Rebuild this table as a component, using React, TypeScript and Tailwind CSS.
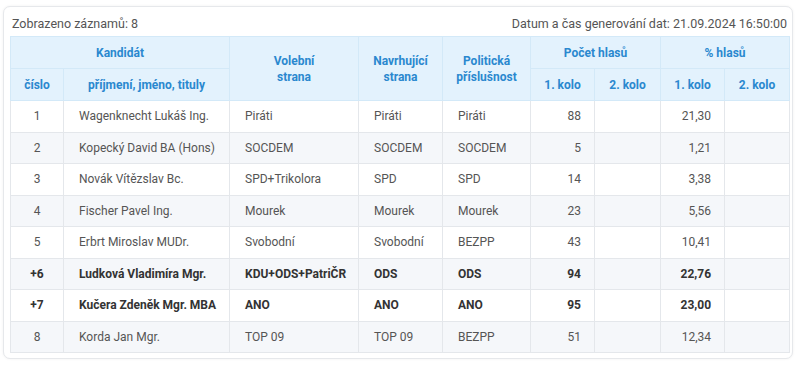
import React from "react";

type Row = { n: string; name: string; vol: string; nav: string; pol: string; v1: string; p1: string; bold?: boolean };

const rows: Row[] = [
  { n: "1", name: "Wagenknecht Lukáš Ing.", vol: "Piráti", nav: "Piráti", pol: "Piráti", v1: "88", p1: "21,30" },
  { n: "2", name: "Kopecký David BA (Hons)", vol: "SOCDEM", nav: "SOCDEM", pol: "SOCDEM", v1: "5", p1: "1,21" },
  { n: "3", name: "Novák Vítězslav Bc.", vol: "SPD+Trikolora", nav: "SPD", pol: "SPD", v1: "14", p1: "3,38" },
  { n: "4", name: "Fischer Pavel Ing.", vol: "Mourek", nav: "Mourek", pol: "Mourek", v1: "23", p1: "5,56" },
  { n: "5", name: "Erbrt Miroslav MUDr.", vol: "Svobodní", nav: "Svobodní", pol: "BEZPP", v1: "43", p1: "10,41" },
  { n: "+6", name: "Ludková Vladimíra Mgr.", vol: "KDU+ODS+PatriČR", nav: "ODS", pol: "ODS", v1: "94", p1: "22,76", bold: true },
  { n: "+7", name: "Kučera Zdeněk Mgr. MBA", vol: "ANO", nav: "ANO", pol: "ANO", v1: "95", p1: "23,00", bold: true },
  { n: "8", name: "Korda Jan Mgr.", vol: "TOP 09", nav: "TOP 09", pol: "BEZPP", v1: "51", p1: "12,34" },
];

export default function App() {
  return (
    <div className="w-[800px] h-[366px] bg-white pl-[3px] pr-[7px] pt-[6px]" style={{ fontFamily: "Roboto, 'Noto Sans', sans-serif" }}>
      <div className="rounded-[7px] border border-[#e6e8eb] shadow-[0_0_3px_rgba(0,0,0,0.06)] pl-[6px] pr-[3px] pt-[6px] pb-[5px] bg-white">
        <div className="flex justify-between items-center h-[23px] px-[2px] text-[12.5px] text-[#555]">
          <span>Zobrazeno záznamů: 8</span>
          <span>Datum a čas generování dat: 21.09.2024 16:50:00</span>
        </div>
        <table className="border-collapse w-[779px] table-fixed text-[12px]">
          <colgroup>
            <col className="w-[53px]" />
            <col className="w-[166px]" />
            <col className="w-[129px]" />
            <col className="w-[84px]" />
            <col className="w-[88px]" />
            <col className="w-[64px]" />
            <col className="w-[66px]" />
            <col className="w-[64px]" />
            <col className="w-[65px]" />
          </colgroup>
          <thead className="bg-[#e3f2fd] text-[#2a88cf] font-bold">
            <tr className="h-[32px]">
              <th colSpan={2} className="border border-[#d3e9f8] font-bold">Kandidát</th>
              <th rowSpan={2} className="border border-[#d3e9f8] font-bold leading-[16px]">Volební<br />strana</th>
              <th rowSpan={2} className="border border-[#d3e9f8] font-bold leading-[16px]">Navrhující<br />strana</th>
              <th rowSpan={2} className="border border-[#d3e9f8] font-bold leading-[16px]">Politická<br />příslušnost</th>
              <th colSpan={2} className="border border-[#d3e9f8] font-bold">Počet hlasů</th>
              <th colSpan={2} className="border border-[#d3e9f8] font-bold">% hlasů</th>
            </tr>
            <tr className="h-[32px]">
              <th className="border border-[#d3e9f8] font-bold">číslo</th>
              <th className="border border-[#d3e9f8] font-bold">příjmení, jméno, tituly</th>
              <th className="border border-[#d3e9f8] font-bold">1. kolo</th>
              <th className="border border-[#d3e9f8] font-bold">2. kolo</th>
              <th className="border border-[#d3e9f8] font-bold">1. kolo</th>
              <th className="border border-[#d3e9f8] font-bold">2. kolo</th>
            </tr>
          </thead>
          <tbody>
            {rows.map((r, i) => {
              const bg = i % 2 === 1 ? "bg-[#f5f7fa]" : "bg-white";
              const tc = r.bold ? "font-bold text-[#333]" : "text-[#555]";
              const cell = "border border-[#e4e7eb]";
              return (
                <tr key={i} className={`h-[31.5px] ${bg} ${tc}`}>
                  <td className={`${cell} text-center`}>{r.n}</td>
                  <td className={`${cell} pl-[15px]`}>{r.name}</td>
                  <td className={`${cell} pl-[15px]`}>{r.vol}</td>
                  <td className={`${cell} pl-[15px]`}>{r.nav}</td>
                  <td className={`${cell} pl-[15px]`}>{r.pol}</td>
                  <td className={`${cell} text-right pr-[13px]`}>{r.v1}</td>
                  <td className={cell}></td>
                  <td className={`${cell} text-right pr-[13px]`}>{r.p1}</td>
                  <td className={cell}></td>
                </tr>
              );
            })}
          </tbody>
        </table>
      </div>
    </div>
  );
}
